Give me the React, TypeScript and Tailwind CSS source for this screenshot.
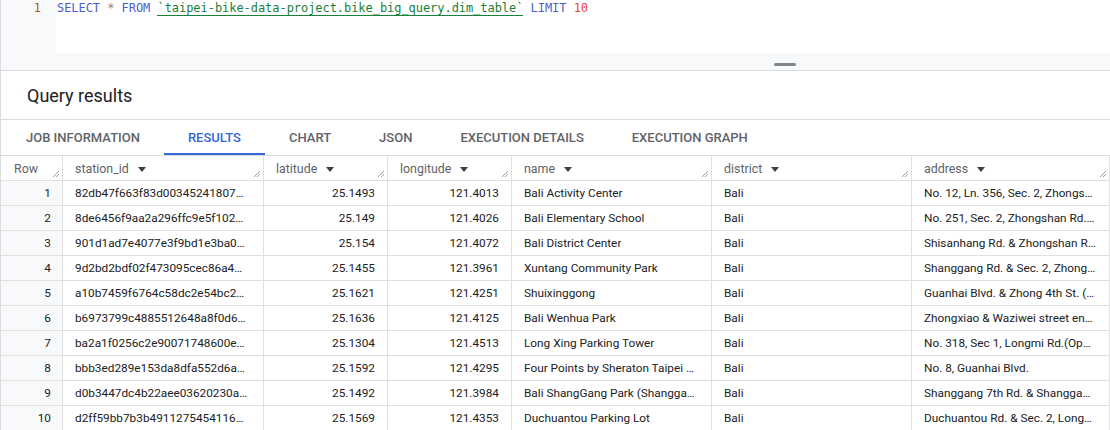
import React from 'react';

const columns = [
  { key: 'station_id', label: 'station_id', width: 'w-[201px]', align: 'left' },
  { key: 'latitude', label: 'latitude', width: 'w-[124px]', align: 'right' },
  { key: 'longitude', label: 'longitude', width: 'w-[124px]', align: 'right' },
  { key: 'name', label: 'name', width: 'w-[200px]', align: 'left' },
  { key: 'district', label: 'district', width: 'w-[200px]', align: 'left' },
  { key: 'address', label: 'address', width: 'flex-1', align: 'left' },
];

const rows = [
  ['82db47f663f83d00345241807…', '25.1493', '121.4013', 'Bali Activity Center', 'Bali', 'No. 12, Ln. 356, Sec. 2, Zhongs…'],
  ['8de6456f9aa2a296ffc9e5f102…', '25.149', '121.4026', 'Bali Elementary School', 'Bali', 'No. 251, Sec. 2, Zhongshan Rd.…'],
  ['901d1ad7e4077e3f9bd1e3ba0…', '25.154', '121.4072', 'Bali District Center', 'Bali', 'Shisanhang Rd. & Zhongshan R…'],
  ['9d2bd2bdf02f473095cec86a4…', '25.1455', '121.3961', 'Xuntang Community Park', 'Bali', 'Shanggang Rd. & Sec. 2, Zhong…'],
  ['a10b7459f6764c58dc2e54bc2…', '25.1621', '121.4251', 'Shuixinggong', 'Bali', 'Guanhai Blvd. & Zhong 4th St. (…'],
  ['b6973799c4885512648a8f0d6…', '25.1636', '121.4125', 'Bali Wenhua Park', 'Bali', 'Zhongxiao & Waziwei street en…'],
  ['ba2a1f0256c2e90071748600e…', '25.1304', '121.4513', 'Long Xing Parking Tower', 'Bali', 'No. 318, Sec 1, Longmi Rd.(Op…'],
  ['bbb3ed289e153da8dfa552d6a…', '25.1592', '121.4295', 'Four Points by Sheraton Taipei …', 'Bali', 'No. 8, Guanhai Blvd.'],
  ['d0b3447dc4b22aee03620230a…', '25.1492', '121.3984', 'Bali ShangGang Park (Shangga…', 'Bali', 'Shanggang 7th Rd. & Shangga…'],
  ['d2ff59bb7b3b4911275454116…', '25.1569', '121.4353', 'Duchuantou Parking Lot', 'Bali', 'Duchuantou Rd. & Sec. 2, Long…'],
];

const tabs = ['JOB INFORMATION', 'RESULTS', 'CHART', 'JSON', 'EXECUTION DETAILS', 'EXECUTION GRAPH'];

const Grip = () => (
  <svg className="absolute right-[3px] bottom-[3px]" width="7" height="7" viewBox="0 0 7 7">
    <path d="M1 7 L7 1 M4 7 L7 4" stroke="#9aa0a6" strokeWidth="1" />
  </svg>
);

const SortArrow = () => (
  <svg width="8" height="5" viewBox="0 0 8 5" className="ml-[9px] shrink-0">
    <path d="M0 0 L8 0 L4 5 Z" fill="#3c4043" />
  </svg>
);

const App = () => {
  return (
    <div className="w-[1110px] h-[430px] overflow-hidden bg-white border-l border-[#dadce0] font-['Roboto',sans-serif] text-[#202124]">
      {/* editor */}
      <div className="h-[71px] bg-[#f8f9fa] border-b border-[#dadce0] flex flex-col">
        <div className="flex h-[53px]">
          <div className="w-[55px] shrink-0 pr-[15px] text-right font-['DejaVu_Sans_Mono',monospace] text-[12px] leading-[16px] text-[#b06000]">1</div>
          <div className="flex-1 bg-white font-['DejaVu_Sans_Mono',monospace] text-[12px] leading-[16px] whitespace-pre pl-[1px] tracking-[-0.05px]">
            <span className="text-[#4a5fd0]">SELECT</span>
            <span className="text-[#80868b]"> * </span>
            <span className="text-[#4a5fd0]">FROM</span>{' '}
            <span className="text-[#188038] border-b border-[#188038]">`taipei-bike-data-project.bike_big_query.dim_table`</span>{' '}
            <span className="text-[#4a5fd0]">LIMIT</span>{' '}
            <span className="text-[#e8453c]">10</span>
          </div>
        </div>
        <div className="flex-1 flex items-center">
          <div className="ml-[773px] mt-[5px] w-[22px] h-[3px] rounded-full bg-[#80868b]" />
        </div>
      </div>

      {/* title */}
      <div className="h-[49px] border-b border-[#dadce0] flex items-center pl-[26px] text-[18px] text-[#202124]">
        Query results
      </div>

      {/* tabs */}
      <div className="h-[36px] flex border-b border-[#dadce0] pl-[1px]">
        {tabs.map((tab, i) => (
          <div
            key={tab}
            className={
              'px-6 pt-[2px] flex items-center text-[13px] font-medium border-b-2 ' +
              (i === 1 ? 'text-[#3367d6] border-[#3367d6]' : 'text-[#5f6368] border-transparent')
            }
          >
            {tab}
          </div>
        ))}
      </div>

      {/* table */}
      <div className="text-[11.8px]">
        <div className="flex h-[25px] border-b border-[#e0e0e0]">
          <div className="relative w-[62px] shrink-0 border-r border-[#e0e0e0] pl-[13px] pt-[2px] flex items-center text-[#5f6368] text-[12.4px]">
            Row
            <Grip />
          </div>
          {columns.map((c) => (
            <div
              key={c.key}
              className={'relative shrink-0 border-r border-[#e0e0e0] pl-[12px] pt-[2px] flex items-center text-[#5f6368] text-[12.4px] ' + c.width}
            >
              {c.label}
              <SortArrow />
              <Grip />
            </div>
          ))}
        </div>
        {rows.map((r, ri) => (
          <div key={ri} className="flex h-[25px] border-b border-[#e0e0e0]">
            <div className="w-[62px] shrink-0 bg-[#f8f9fa] border-r border-[#e0e0e0] pr-[11px] pt-[2px] flex items-center justify-end">
              {ri + 1}
            </div>
            {columns.map((c, ci) => (
              <div
                key={c.key}
                className={
                  'shrink-0 border-r border-[#e0e0e0] pl-[12px] pt-[2px] flex items-center overflow-hidden whitespace-nowrap ' +
                  c.width +
                  (c.align === 'right' ? ' justify-end pr-[12px]' : ' pr-[4px]')
                }
              >
                <span className="truncate">{r[ci]}</span>
              </div>
            ))}
          </div>
        ))}
      </div>
    </div>
  );
};

export default App;
